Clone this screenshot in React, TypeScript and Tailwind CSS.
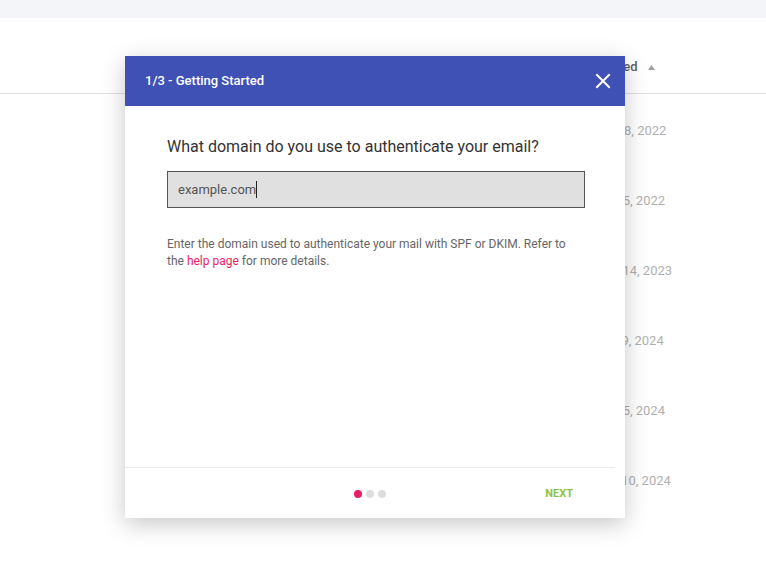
import React from 'react';

const dates = ['Mar 8, 2022', 'Jun 5, 2022', 'Feb 14, 2023', 'Apr 9, 2024', 'Jan 5, 2024', 'Oct 10, 2024'];

function CloseIcon() {
  return (
    <svg width="16" height="16" viewBox="0 0 16 16" fill="none" stroke="white" strokeWidth="2" strokeLinecap="square">
      <path d="M2 2 L14 14 M14 2 L2 14" />
    </svg>
  );
}

export default function App() {
  return (
    <div className="relative w-[766px] h-[584px] bg-white overflow-hidden font-['Roboto',sans-serif]">
      {/* page top bar */}
      <div className="h-[18px] bg-[#f4f5f9]" />

      {/* table behind the wizard */}
      <div className="flex flex-col">
        <div className="h-[76px] flex items-end pb-[16px] pl-[592px] border-b border-[#e0e0e0]">
          <span className="flex items-center gap-[10px] text-[13px] font-medium text-[#616161] leading-5">
            Created
            <svg width="7" height="5" viewBox="0 0 7 5">
              <path d="M3.5 0 L7 5 L0 5 Z" fill="#9e9e9e" />
            </svg>
          </span>
        </div>
        <div className="pt-[2px] flex flex-col">
          {dates.map((d) => (
            <div key={d} className="h-[70px] flex items-center pl-[598px] text-[13px] text-[#b0b0b0]">
              {d}
            </div>
          ))}
        </div>
      </div>

      {/* wizard dialog */}
      <div className="absolute left-[125px] top-[56px] w-[500px] h-[462px] bg-white flex flex-col shadow-[0_6px_22px_rgba(0,0,0,0.22)]">
        <div className="h-[50px] bg-[#3f51b5] flex items-center justify-between pl-5 pr-[14px]">
          <span className="text-[13px] font-medium text-white">1/3 - Getting Started</span>
          <CloseIcon />
        </div>

        <div className="flex-1 pl-[42px] pr-[40px] pt-[30px]">
          <h2 className="text-[16px] leading-[22px] text-[#333333]">What domain do you use to authenticate your email?</h2>
          <div className="mt-[13px] h-[37px] bg-[#e0e0e0] border border-[#555555] flex items-center px-[10px]">
            <span className="text-[13px] text-[#555555]">example.com</span>
            <span className="w-px h-[17px] bg-[#222222]" />
          </div>
          <p className="mt-[28px] text-[12px] leading-[17px] text-[#666666] w-[410px]">
            Enter the domain used to authenticate your mail with SPF or DKIM. Refer to the{' '}
            <a className="text-[#e91e63]">help page</a> for more details.
          </p>
        </div>

        <div className="w-[490px] border-t border-[#e8e8e8] h-[51px] relative flex items-center justify-center pt-[2px]">
          <div className="flex gap-1">
            <span className="w-2 h-2 rounded-full bg-[#e91e63]" />
            <span className="w-2 h-2 rounded-full bg-[#dddddd]" />
            <span className="w-2 h-2 rounded-full bg-[#dddddd]" />
          </div>
          <span className="absolute right-[42px] text-[11px] font-bold text-[#8bc34a]">NEXT</span>
        </div>
      </div>
    </div>
  );
}
